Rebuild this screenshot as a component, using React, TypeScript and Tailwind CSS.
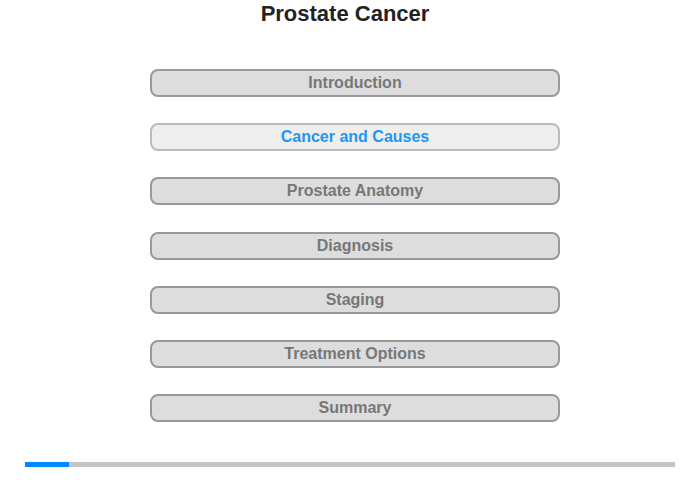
import React from "react";

const items = [
  "Introduction",
  "Cancer and Causes",
  "Prostate Anatomy",
  "Diagnosis",
  "Staging",
  "Treatment Options",
  "Summary",
];

export default function App() {
  return (
    <div className="w-[700px] h-[480px] bg-white relative" style={{ fontFamily: '"Liberation Sans", Arial, sans-serif' }}>
      <div className="pr-[10px] pt-[1px] h-[28px] text-center text-[22px] leading-[26px] font-bold text-[#222]">
        Prostate Cancer
      </div>
      <div className="mt-[41px] flex flex-col items-center gap-[26.2px] pl-[10px]">
        {items.map((t, i) => {
          const active = i === 1;
          return (
            <div
              key={t}
              className={
                active
                  ? "w-[410px] h-[28px] rounded-[8px] border-2 border-[#bbbbbb] bg-[#eeeeee] flex items-center justify-center text-[16px] font-bold text-[#2196f3]"
                  : "w-[410px] h-[28px] rounded-[8px] border-2 border-[#999999] bg-[#dddddd] flex items-center justify-center text-[16px] font-bold text-[#777777]"
              }
            >
              {t}
            </div>
          );
        })}
      </div>
      <div className="mt-[40px] ml-[25px] w-[650px] h-[5px] bg-[#c4c4c4] flex">
        <div className="w-[44px] h-full bg-[#0088ff]" />
      </div>
    </div>
  );
}
